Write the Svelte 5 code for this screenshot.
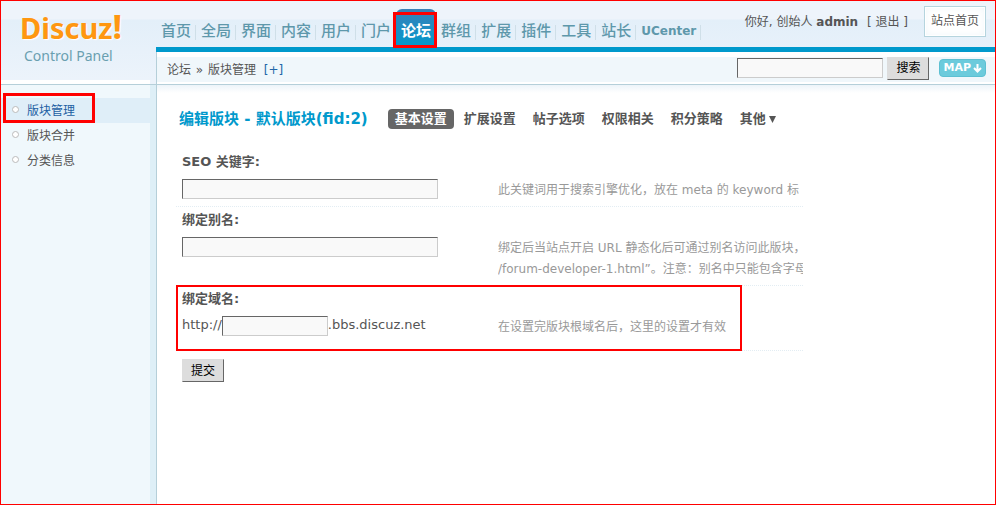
<script>
  const navItems = ['首页', '全局', '界面', '内容', '用户', '门户', '论坛', '群组', '扩展', '插件', '工具', '站长', 'UCenter'];
  const menu = ['版块管理', '版块合并', '分类信息'];
  const tabs = ['基本设置', '扩展设置', '帖子选项', '权限相关', '积分策略'];
</script>

<div class="page">
  <header>
    <div class="logo">
      <a href="#home" class="brand">Discuz<span>!</span></a>
      <p>Control Panel</p>
    </div>
    <div class="head">
      <div class="top">
        <nav>
          {#each navItems as item}
            <a href="#{item}" class:active={item === '论坛'} class:latin={item === 'UCenter'}>
              {item}{#if item === '论坛'}<i class="mark"></i>{/if}
            </a>
          {/each}
        </nav>
        <p class="user">你好, 创始人 <b>admin</b> <span>[ <a href="#logout">退出</a> ]</span></p>
        <a class="site" href="#site">站点首页</a>
      </div>
      <div class="crumbs">
        <p>论坛 <span class="sep">»</span> 版块管理 <a href="#add">[+]</a></p>
        <form class="search">
          <input type="text" aria-label="搜索" />
          <button type="button">搜索</button>
        </form>
        <a class="map" href="#map">MAP
          <svg width="9" height="9" viewBox="0 0 9 9" aria-hidden="true"><path d="M4.500 0v7M1 4l3.500 3.500L8 4" fill="none" stroke="#fff" stroke-width="2" /></svg>
        </a>
      </div>
    </div>
  </header>

  <div class="body">
    <aside>
      <ul>
        {#each menu as item, i}
          <li class:current={i === 0}>
            <a href="#{item}">{item}</a>
            {#if i === 0}<i class="mark"></i>{/if}
          </li>
        {/each}
      </ul>
    </aside>

    <main>
      <div class="title">
        <h1>编辑版块 - 默认版块(fid:2)</h1>
        <div class="tabs">
          {#each tabs as tab, i}
            <a href="#{tab}" class:on={i === 0}>{tab}</a>
          {/each}
          <a href="#more" class="more">其他
            <svg width="7" height="7" viewBox="0 0 7 7" aria-hidden="true"><path d="M0 0h7L3.500 7z" fill="#555" /></svg>
          </a>
        </div>
      </div>

      <form class="settings">
        <div class="row">
          <label for="seo">SEO 关键字:</label>
          <div class="field"><input id="seo" type="text" /></div>
          <p class="tip">此关键词用于搜索引擎优化，放在 meta 的 keyword 标</p>
        </div>
        <div class="row">
          <label for="alias">绑定别名:</label>
          <div class="field"><input id="alias" type="text" /></div>
          <p class="tip">绑定后当站点开启 URL 静态化后可通过别名访问此版块，<br />/forum-developer-1.html”。注意：别名中只能包含字母</p>
        </div>
        <div class="row domain">
          <label for="domain">绑定域名:</label>
          <div class="field">http://<input id="domain" type="text" />.bbs.discuz.net</div>
          <p class="tip">在设置完版块根域名后，这里的设置才有效</p>
          <i class="mark"></i>
        </div>
        <button type="button">提交</button>
      </form>
    </main>
  </div>
</div>

<style>
  :global(body) { margin: 0; }
  .page, .page * { box-sizing: border-box; }
  .page {
    min-height: 100vh;
    display: flex;
    flex-direction: column;
    border: 1px solid #f00;
    background: #fff;
    color: #555;
    font: 12px/18px "DejaVu Sans", "Noto Sans CJK SC", sans-serif;
  }
  p, h1, ul { margin: 0; padding: 0; }
  a { color: inherit; text-decoration: none; }
  input {
    height: 20px;
    margin: 0;
    padding: 0 2px;
    border: 1px solid;
    border-color: #666 #ccc #ccc #666;
    background: #f9f9f9;
    font: inherit;
  }
  button {
    width: 42px;
    height: 23px;
    padding: 0;
    border: 1px solid;
    border-color: #ddd #666 #666 #ddd;
    background: #ddd;
    color: #000;
    font: inherit;
  }
  .mark {
    position: absolute;
    border: 3px solid #f00;
    pointer-events: none;
  }

  header {
    display: flex;
    border-bottom: 1px solid #b5cfd9;
    background: linear-gradient(#eef4fb 18px, #e3eff9 19px, #ecf3fb 79px);
  }
  .logo {
    width: 155px;
    padding: 8px 0 0 19px;
    background: linear-gradient(#fff, #fff) left bottom / 149px 4px no-repeat;
  }
  .brand {
    display: block;
    color: #ff9710;
    font: bold 29px/38px "Noto Sans", "Open Sans", sans-serif;
    text-shadow: 1px 1px 1px #fff;
  }
  .brand span { font-size: 34px; line-height: 30px; }
  .logo p {
    padding-left: 4px;
    color: #6a9fb0;
    font: 14px/18px "Noto Sans", "Open Sans", sans-serif;
  }
  .head { flex: 1; min-width: 0; }
  .top {
    display: flex;
    height: 51px;
    padding-right: 9px;
    border-bottom: 5px solid #09c;
  }
  nav { display: flex; padding-top: 8px; }
  nav a {
    position: relative;
    height: 38px;
    padding: 0 4px 0 5px;
    color: #5e98ab;
    font-size: 15px;
    font-weight: 500;
    line-height: 44px;
    white-space: nowrap;
    border-right: 1px solid transparent;
    background: linear-gradient(#cfdfe8, #cfdfe8) right 16px / 1px 15px no-repeat;
    background-origin: border-box;
  }
  nav a.latin { font-size: 12px; font-weight: bold; }
  nav a.active {
    border: 0;
    padding-right: 5px;
    border-radius: 6px 6px 0 0;
    background: linear-gradient(#3a80b8, #09c);
    color: #fff;
    font-weight: bold;
  }
  nav .mark { inset: 3px -1px -1px -3px; }
  .user { margin-left: auto; padding-top: 12px; white-space: nowrap; }
  .user span { margin-left: 5px; }
  .site {
    align-self: flex-start;
    margin: 5px 0 0 16px;
    padding: 0 6px;
    border: 1px solid #b5d4de;
    background: #fff;
    box-shadow: inset 0 0 0 1px #fff, inset 0 0 8px #eef5f9;
    line-height: 29px;
    white-space: nowrap;
  }
  .crumbs {
    display: flex;
    align-items: center;
    height: 32px;
    padding: 0 9px 0 10px;
    border-left: 1px solid #b5cfd9;
    background: linear-gradient(#fff 5px, #f0f7fb 5px, #f0f7fb 30px, #fff 30px);
  }
  .crumbs p { padding-top: 4px; }
  .crumbs p a { margin-left: 4px; color: #2366a8; }
  .sep { margin: 0 1px; }
  .search { display: flex; align-items: center; gap: 4px; margin-left: auto; }
  .search input { width: 146px; }
  .map {
    display: flex;
    align-items: center;
    gap: 2px;
    height: 18px;
    margin-left: 10px;
    padding: 0 3px;
    border: 1px solid #5dc0d2;
    border-radius: 4px;
    background: #6ccbdc;
    color: #fff;
    font-size: 11px;
    font-weight: bold;
  }

  .body { flex: 1; display: flex; }
  aside {
    width: 155px;
    padding-top: 13px;
    border-right: 6px solid #deeff7;
    background: #f0f8fc;
  }
  ul { list-style: none; }
  li {
    position: relative;
    display: flex;
    align-items: center;
    height: 25px;
    padding-left: 11px;
    gap: 8px;
  }
  li::before {
    content: "";
    box-sizing: border-box;
    width: 7px;
    height: 7px;
    margin-bottom: 3px;
    border: 1px solid #bbb;
    border-radius: 50%;
    background: #fff;
  }
  li.current { background: #dfeef8; color: #1d5fa3; }
  li .mark { inset: -5px 55px 0 2px; }

  main {
    flex: 1;
    min-width: 0;
    padding: 24px 19px 20px;
    border-left: 1px solid #b5cfd9;
    background: linear-gradient(#edf4f9, #fff 8px);
  }
  .title { display: flex; align-items: center; gap: 20px; padding-left: 3px; }
  h1 { color: #09c; font-size: 15px; line-height: 20px; white-space: nowrap; }
  .tabs { display: flex; gap: 3px; font-size: 13px; font-weight: bold; line-height: 20px; }
  .tabs a { padding: 0 7px; white-space: nowrap; }
  .tabs .on { border-radius: 4px; background: #666; color: #fff; }
  .tabs .more { display: flex; align-items: center; gap: 3px; }

  .settings { max-width: 627px; padding-top: 20px; }
  .row {
    position: relative;
    display: grid;
    grid-template-columns: 316px minmax(0, 1fr);
    row-gap: 8px;
    padding: 4px 0 5px 6px;
    border-bottom: 1px dotted #e3edf3;
  }
  .row label { grid-column: 1 / -1; font-size: 13px; font-weight: bold; }
  .field { display: flex; align-items: flex-start; font-size: 13px; }
  .field input { width: 256px; }
  .tip {
    overflow: hidden;
    padding-top: 1px;
    color: #999;
    line-height: 21px;
    white-space: nowrap;
  }
  .domain { padding-bottom: 12px; }
  .domain input { width: 106px; }
  .domain .mark { inset: -1px 61px -1px 0; border-width: 2px; }
  .settings button { margin: 8px 0 0 6px; }
</style>
